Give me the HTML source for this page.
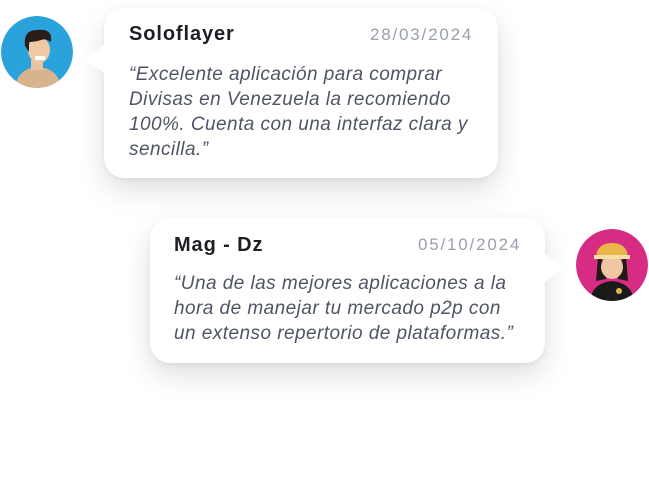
<!DOCTYPE html>
<html><head><style>
html,body{margin:0;padding:0;background:#fff;width:649px;height:487px;overflow:hidden;position:relative;font-family:"Liberation Sans",sans-serif}
.card{position:absolute;background:#fff;border-radius:20px;box-shadow:0 12px 28px rgba(0,0,0,0.13),0 2px 6px rgba(0,0,0,0.05)}
.name{position:absolute;font-weight:bold;font-size:20px;color:#1d1f24;letter-spacing:0.9px}
.date{position:absolute;font-size:17px;color:#9aa0ab;letter-spacing:1.8px}
.body{position:absolute;font-style:italic;font-size:19px;line-height:25px;color:#4f5563;letter-spacing:0.45px;white-space:nowrap}
.av{position:absolute;border-radius:50%;overflow:hidden}
</style></head><body>
<div class="card" style="left:104px;top:8px;width:394px;height:170px"></div>
<svg style="position:absolute;left:84px;top:40px" width="24" height="36"><path d="M22 2 L22 34 L2 20 Z" fill="#fff"/></svg>
<div class="name" style="left:129px;top:23px">Soloflayer</div>
<div class="date" style="left:370px;top:25px">28/03/2024</div>
<div class="body" style="left:129px;top:62px">“Excelente aplicación para comprar<br>Divisas en Venezuela la recomiendo<br>100%. Cuenta con una interfaz clara y<br>sencilla.”</div>

<div class="card" style="left:150px;top:218px;width:395px;height:145px"></div>
<svg style="position:absolute;left:541px;top:250px" width="24" height="36"><path d="M2 2 L2 34 L22 18 Z" fill="#fff"/></svg>
<div class="name" style="left:174px;top:234px">Mag - Dz</div>
<div class="date" style="left:418px;top:235px">05/10/2024</div>
<div class="body" style="left:174px;top:271px">“Una de las mejores aplicaciones a la<br>hora de manejar tu mercado p2p con<br>un extenso repertorio de plataformas.”</div>

<svg class="av" style="left:1px;top:16px" width="72" height="72" viewBox="0 0 72 72">
<circle cx="36" cy="36" r="36" fill="#2aa3dc"/>
<path d="M14 72 Q16 56 30 52 L44 52 Q58 56 60 72 Z" fill="#d8b48e"/>
<rect x="30" y="44" width="12" height="10" fill="#e9c4a0"/>
<ellipse cx="38" cy="34" rx="11" ry="13" fill="#eec9a4"/>
<path d="M24 30 Q22 14 36 14 Q52 12 50 26 Q44 22 40 24 Q34 26 28 26 L28 36 Z" fill="#2a1d1a"/>
<rect x="34" y="40" width="10" height="4" fill="#fff"/>
</svg>
<svg class="av" style="left:576px;top:229px" width="72" height="72" viewBox="0 0 72 72">
<circle cx="36" cy="36" r="36" fill="#d62c84"/>
<path d="M14 72 Q16 54 36 52 Q56 54 58 72 Z" fill="#1a1a1a"/>
<path d="M22 28 L20 52 L30 50 L30 34 Z M50 28 L52 52 L42 50 L42 34 Z" fill="#1f1a18"/>
<ellipse cx="36" cy="38" rx="11" ry="12" fill="#f0c6a4"/>
<path d="M20 30 Q20 14 36 14 Q52 14 52 30 Z" fill="#e9b548"/>
<rect x="18" y="26" width="36" height="4" fill="#f3dfa8"/>
<circle cx="43" cy="62" r="3" fill="#e9b548"/>
</svg>
</body></html>
